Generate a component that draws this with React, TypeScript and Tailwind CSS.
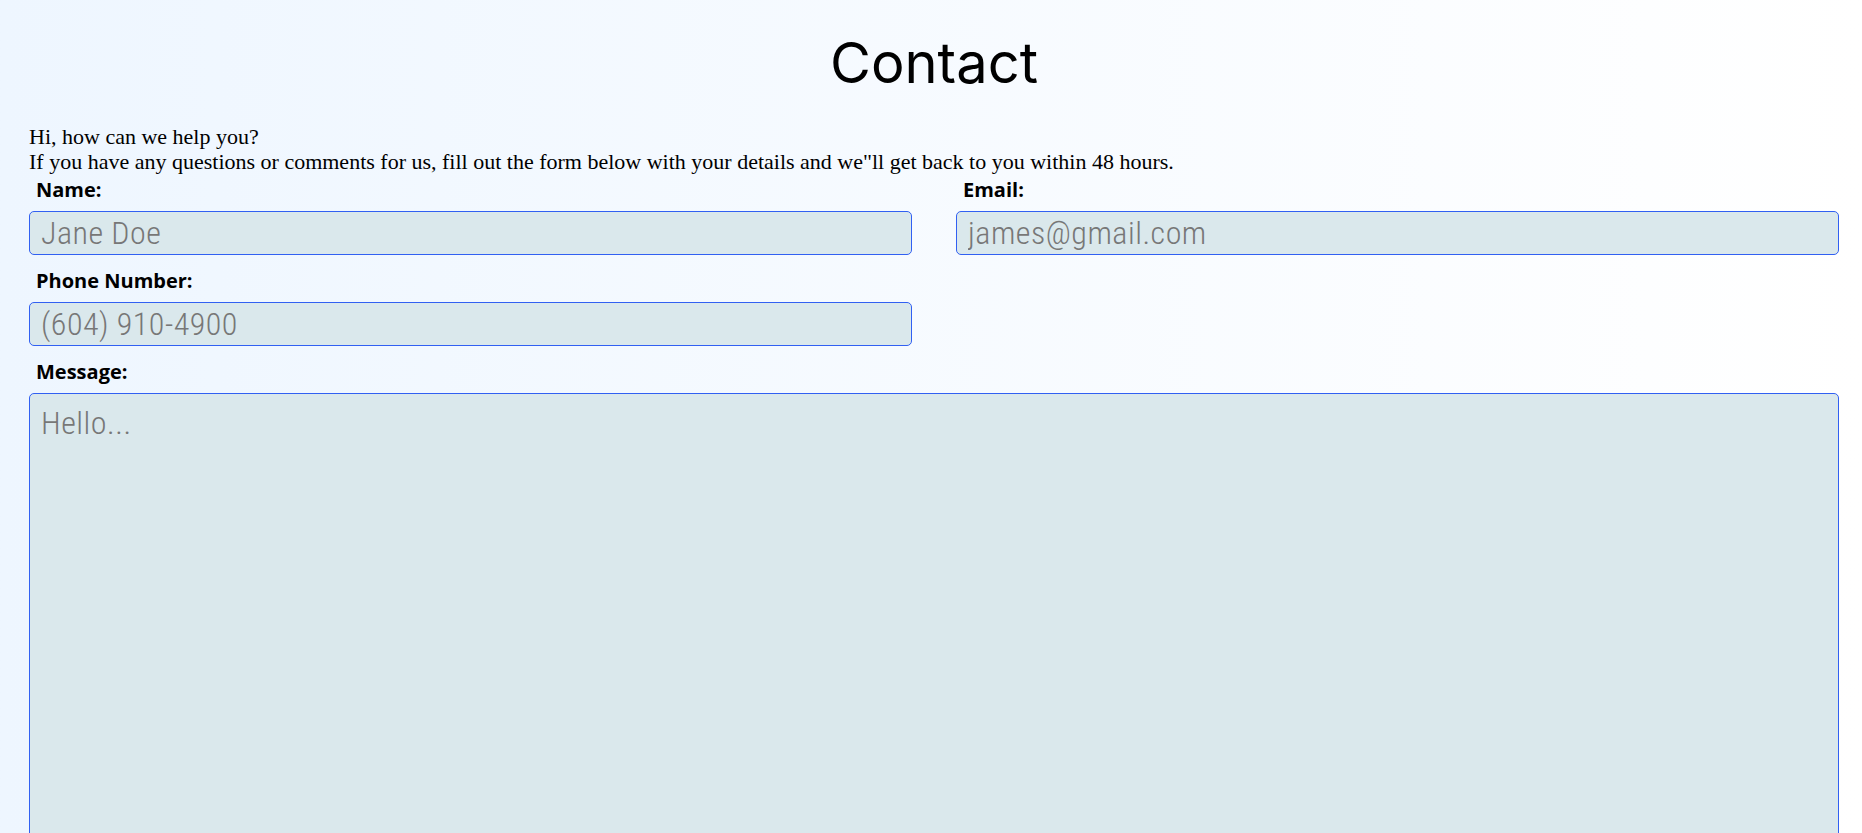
const fieldClass =
  "w-full h-[44px] rounded-[5px] border border-[#3160f2] bg-[#dae8ec] px-[11px] font-['Roboto_Condensed','DejaVu_Sans_Condensed',sans-serif] text-[32px] font-light tracking-[0.5px] text-[#333] placeholder:text-[#777] outline-none";

const labelClass =
  "block pl-[7px] mb-[8px] font-['Open_Sans',sans-serif] text-[20px] font-bold leading-[27px] text-black";

function Field({
  id,
  label,
  type = "text",
  placeholder,
}: {
  id: string;
  label: string;
  type?: string;
  placeholder: string;
}) {
  return (
    <div className="mb-[12px]">
      <label htmlFor={id} className={labelClass}>
        {label}
      </label>
      <input id={id} type={type} placeholder={placeholder} className={fieldClass} />
    </div>
  );
}

export default function App() {
  return (
    <div className="min-h-screen overflow-hidden bg-linear-to-r from-[#eef6ff] to-white pl-[29px] pr-[23px]">
      <h1 className="pt-[29px] text-center font-['Inter',sans-serif] text-[56px] font-normal leading-[68px] text-black">
        Contact
      </h1>

      <div className="mt-[28px] font-['Liberation_Serif',serif] text-[22px] leading-[24.5px] text-black">
        <p>Hi, how can we help you?</p>
        <p>
          If you have any questions or comments for us, fill out the form below with your details and
          we"ll get back to you within 48 hours.
        </p>
      </div>

      <form className="mt-[2px]" onSubmit={(e) => e.preventDefault()}>
        <div className="grid grid-cols-2 gap-x-[44px]">
          <Field id="name" label="Name:" placeholder="Jane Doe" />
          <Field id="email" label="Email:" type="email" placeholder="james@gmail.com" />
          <Field id="phone" label="Phone Number:" type="tel" placeholder="(604) 910-4900" />
        </div>

        <div>
          <label htmlFor="message" className={labelClass}>
            Message:
          </label>
          <textarea
            id="message"
            placeholder="Hello..."
            className="block w-full h-[520px] resize-none rounded-[5px] border border-[#3160f2] bg-[#dae8ec] px-[11px] pt-[5px] font-['Roboto_Condensed','DejaVu_Sans_Condensed',sans-serif] text-[32px] font-light tracking-[0.5px] text-[#333] placeholder:text-[#777] outline-none"
          />
        </div>
      </form>
    </div>
  );
}
